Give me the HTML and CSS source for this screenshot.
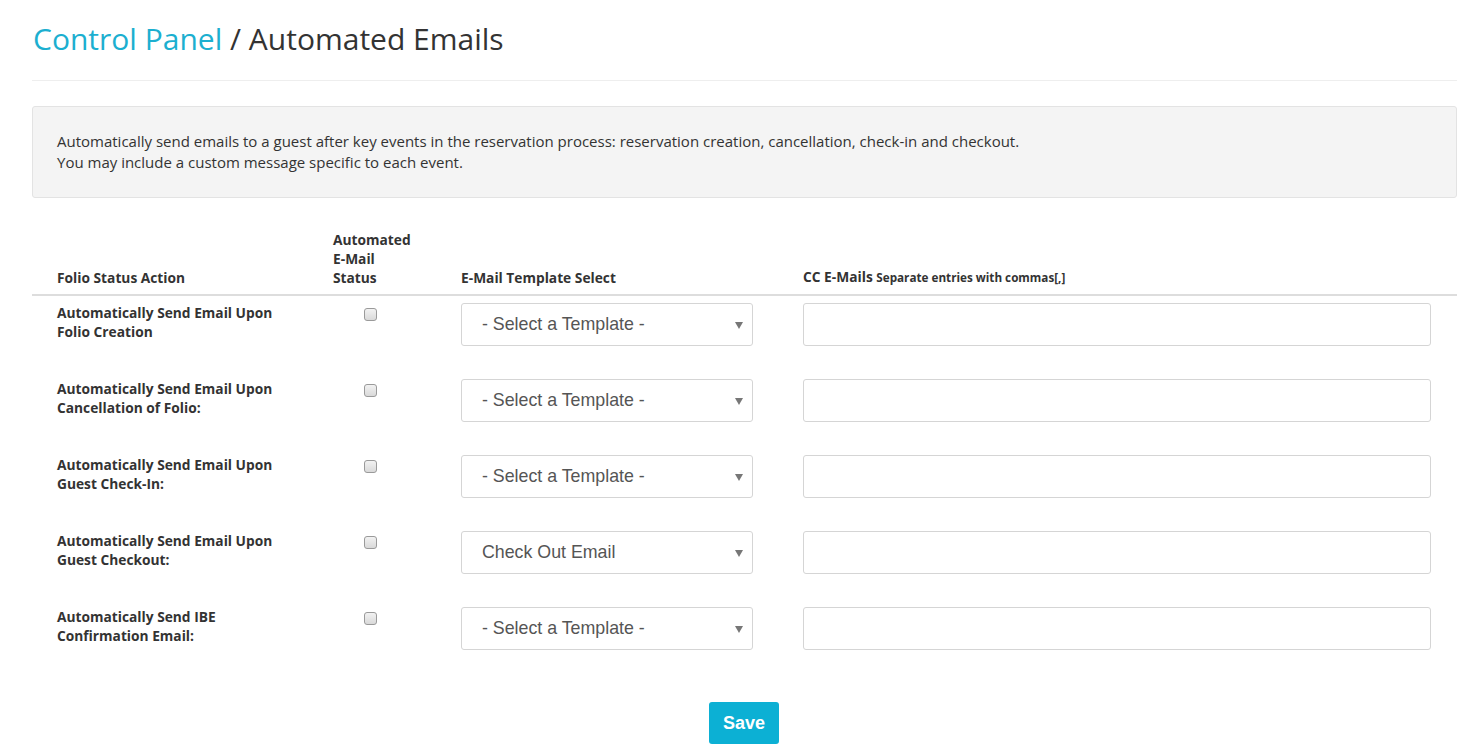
FILE: index.html
```html
<!DOCTYPE html>
<html>
<head>
<meta charset="utf-8">
<link rel="stylesheet" href="styles.css">
</head>
<body>
<div class="page">
  <h1 class="title"><span class="crumb">Control Panel</span> / Automated Emails</h1>
  <hr class="rule">
  <div class="info">
    <p>Automatically send emails to a guest after key events in the reservation process: reservation creation, cancellation, check-in and checkout.</p>
    <p>You may include a custom message specific to each event.</p>
  </div>

  <div class="grid head">
    <div class="hcell label">Folio Status Action</div>
    <div class="hcell status">Automated E-Mail Status</div>
    <div class="hcell">E-Mail Template Select</div>
    <div class="hcell">CC E-Mails <small>Separate entries with commas[,]</small></div>
  </div>

  <div class="grid row">
    <div class="label">Automatically Send Email Upon Folio Creation</div>
    <div><input type="checkbox" class="check"></div>
    <div class="selwrap"><select class="sel"><option>- Select a Template -</option></select></div>
    <div><input type="text" class="txt"></div>
  </div>
  <div class="grid row">
    <div class="label">Automatically Send Email Upon Cancellation of Folio:</div>
    <div><input type="checkbox" class="check"></div>
    <div class="selwrap"><select class="sel"><option>- Select a Template -</option></select></div>
    <div><input type="text" class="txt"></div>
  </div>
  <div class="grid row">
    <div class="label">Automatically Send Email Upon Guest Check-In:</div>
    <div><input type="checkbox" class="check"></div>
    <div class="selwrap"><select class="sel"><option>- Select a Template -</option></select></div>
    <div><input type="text" class="txt"></div>
  </div>
  <div class="grid row">
    <div class="label">Automatically Send Email Upon Guest Checkout:</div>
    <div><input type="checkbox" class="check"></div>
    <div class="selwrap"><select class="sel"><option>Check Out Email</option></select></div>
    <div><input type="text" class="txt"></div>
  </div>
  <div class="grid row">
    <div class="label">Automatically Send IBE Confirmation Email:</div>
    <div><input type="checkbox" class="check"></div>
    <div class="selwrap"><select class="sel"><option>- Select a Template -</option></select></div>
    <div><input type="text" class="txt"></div>
  </div>

  <div class="actions">
    <button class="save">Save</button>
  </div>
</div>
</body>
</html>
```

FILE: styles.css
```css
html, body {
  margin: 0;
  padding: 0;
  background: #fff;
}
body {
  font-family: "Open Sans", "Liberation Sans", sans-serif;
  color: #333;
  font-size: 15px;
}
.page {
  padding: 0 24px 0 32px;
}
.title {
  margin: 0;
  padding-top: 19px;
  font-size: 30px;
  font-weight: 400;
  line-height: 40px;
  padding-left: 1px;
  color: #333;
}
.crumb {
  color: #1cafd0;
}
.rule {
  margin: 21px 0 0 0;
  border: 0;
  border-top: 1px solid #eee;
  height: 0;
}
.info {
  margin-top: 25px;
  background: #f4f4f4;
  border: 1px solid #e3e3e3;
  border-radius: 3px;
  padding: 24px 24px 24px 24px;
}
.info p {
  margin: 0;
  line-height: 21px;
  font-size: 15px;
}
.grid {
  display: grid;
  grid-template-columns: 276px 128px 342px 628px;
  padding: 0 26px 0 25px;
}
.head {
  margin-top: 32px;
  border-bottom: 2px solid #ddd;
  align-items: end;
}
.hcell {
  font-weight: 700;
  font-size: 13.75px;
  line-height: 19px;
  padding-bottom: 7px;
}
.hcell small {
  font-size: 11.7px;
}
.status {
  max-width: 84px;
}
.row {
  height: 76px;
  padding-top: 7px;
  box-sizing: border-box;
  align-items: start;
}
.label {
  font-weight: 700;
  font-size: 13.75px;
  line-height: 19px;
  max-width: 240px;
}
.check {
  -webkit-appearance: none;
  appearance: none;
  width: 13px;
  height: 13px;
  margin: 5px 0 0 31px;
  border: 1px solid #9a9a9a;
  border-radius: 3px;
  background: linear-gradient(#f2f2f2, #d9d9d9);
  box-sizing: border-box;
}
.selwrap {
  position: relative;
  width: 292px;
}
.sel {
  -webkit-appearance: none;
  appearance: none;
  width: 292px;
  height: 43px;
  border: 1px solid #d5d5d5;
  border-radius: 3px;
  background: #fff;
  font-family: "Liberation Sans", Arial, sans-serif;
  font-size: 17.8px;
  color: #555;
  padding: 0 30px 2px 20px;
  box-sizing: border-box;
}
.selwrap::after {
  content: "";
  position: absolute;
  left: 274px;
  top: 19px;
  border-left: 4px solid transparent;
  border-right: 4px solid transparent;
  border-top: 7px solid #777;
}
.txt {
  width: 628px;
  height: 43px;
  border: 1px solid #d5d5d5;
  border-radius: 3px;
  box-sizing: border-box;
  margin: 0;
  background: #fff;
}
.actions {
  display: flex;
  justify-content: center;
  padding-top: 26px;
  padding-right: 1px;
}
.save {
  width: 70px;
  height: 42px;
  border: 0;
  border-radius: 3px;
  background: #0cb0d4;
  color: #fff;
  font-family: "Liberation Sans", Arial, sans-serif;
  font-size: 18px;
  font-weight: 700;
}
```
